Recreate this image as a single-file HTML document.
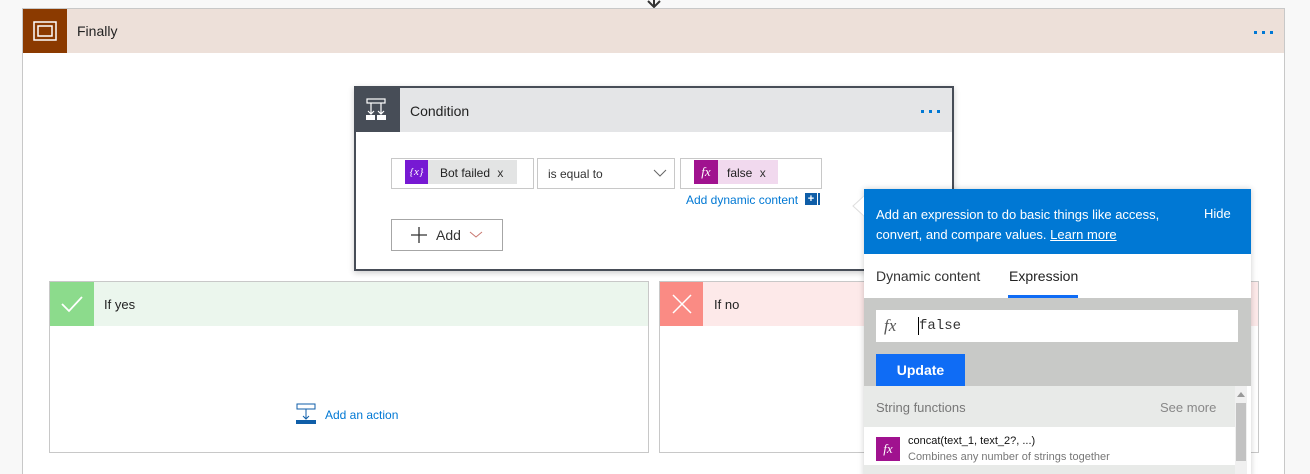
<!DOCTYPE html>
<html><head><style>
*{box-sizing:border-box;margin:0;padding:0}
html,body{width:1310px;height:474px;overflow:hidden}
body{background:#f8f8f8;font-family:"Liberation Sans",sans-serif;position:relative;font-size:13px;color:#222}
.a{position:absolute}
</style></head><body>
<svg class="a" style="left:644px;top:0" width="20" height="9"><path d="M10 0 V7 M4 1 L10 7 L16 1" stroke="#333" stroke-width="2" fill="none"/></svg>
<div class="a" style="left:22px;top:8px;width:1263px;height:466px;background:#fff;border:1px solid #c8c8c8;border-bottom:none"></div>
<div class="a" style="left:23px;top:9px;width:1261px;height:44px;background:#ede0d9"></div>
<div class="a" style="left:23px;top:9px;width:44px;height:44px;background:#8b3a00"></div>
<svg class="a" style="left:33px;top:21px" width="24" height="20"><rect x="1" y="1" width="22" height="18" fill="none" stroke="#fff" stroke-width="1.5"/><rect x="5" y="5" width="14" height="10" fill="none" stroke="#fff" stroke-width="1.5"/></svg>
<div class="a" style="left:77px;top:23px;font-size:14px;color:#222">Finally</div>
<div class="a" style="left:1254px;top:31px;width:30px;height:4px"><span class="a" style="left:0;width:3px;height:3px;background:#0078d4"></span><span class="a" style="left:8px;width:3px;height:3px;background:#0078d4"></span><span class="a" style="left:16px;width:3px;height:3px;background:#0078d4"></span></div>

<div class="a" style="left:354px;top:86px;width:600px;height:185px;background:#fff;border:2px solid #474d57;box-shadow:0 2px 6px rgba(0,0,0,.2)"></div>
<div class="a" style="left:356px;top:88px;width:596px;height:44px;background:#e4e5e7"></div>
<div class="a" style="left:356px;top:88px;width:44px;height:44px;background:#474d57"></div>
<svg class="a" style="left:366px;top:98px" width="22" height="24"><rect x="1" y="1" width="18" height="4" fill="none" stroke="#fff" stroke-width="1.2"/><path d="M5 5 V16 M2 13 L5 16 L8 13 M15 5 V16 M12 13 L15 16 L18 13" stroke="#fff" stroke-width="1.2" fill="none"/><rect x="0" y="17" width="9" height="5" fill="#fff"/><rect x="11" y="17" width="9" height="5" fill="#fff"/></svg>
<div class="a" style="left:410px;top:103px;font-size:14px">Condition</div>
<div class="a" style="left:921px;top:110px;width:30px;height:4px"><span class="a" style="left:0;width:3px;height:3px;background:#0078d4"></span><span class="a" style="left:8px;width:3px;height:3px;background:#0078d4"></span><span class="a" style="left:16px;width:3px;height:3px;background:#0078d4"></span></div>

<div class="a" style="left:391px;top:158px;width:143px;height:31px;border:1px solid #c8c8c8"></div>
<div class="a" style="left:405px;top:160px;width:112px;height:24px;background:#e3e4e4"></div>
<div class="a" style="left:405px;top:160px;width:23px;height:24px;background:#7719d3;color:#fff;font-size:11px;font-family:'Liberation Serif',serif;font-style:italic;text-align:center;line-height:24px">{x}</div>
<div class="a" style="left:440px;top:166px;font-size:12px">Bot failed <span style="margin-left:4px;color:#333">x</span></div>
<div class="a" style="left:537px;top:158px;width:138px;height:31px;border:1px solid #c8c8c8"></div>
<div class="a" style="left:548px;top:167px;font-size:12px;color:#333">is equal to</div>
<svg class="a" style="left:653px;top:169px" width="14" height="9"><path d="M1 1 L7 7 L13 1" stroke="#666" fill="none"/></svg>
<div class="a" style="left:680px;top:158px;width:142px;height:31px;border:1px solid #c8c8c8"></div>
<div class="a" style="left:694px;top:160px;width:84px;height:24px;background:#f1d9ee"></div>
<div class="a" style="left:694px;top:160px;width:24px;height:24px;background:#a0128f;color:#fff;font-size:13px;font-family:'Liberation Serif',serif;font-style:italic;text-align:center;line-height:24px">fx</div>
<div class="a" style="left:727px;top:166px;font-size:12px">false <span style="margin-left:4px;color:#333">x</span></div>
<div class="a" style="left:686px;top:193px;font-size:12px;color:#0078d4">Add dynamic content</div>
<div class="a" style="left:805px;top:193px;width:12px;height:12px;background:#0f5ea8;color:#fff;font-size:11px;line-height:12px;text-align:center;font-weight:bold">+</div>
<div class="a" style="left:818px;top:193px;width:2px;height:12px;background:#0f5ea8"></div>

<div class="a" style="left:391px;top:219px;width:112px;height:32px;border:1px solid #a6a6a6"></div>
<svg class="a" style="left:410px;top:226px" width="18" height="18"><path d="M9 1 V17 M1 9 H17" stroke="#333" stroke-width="1.3"/></svg>
<div class="a" style="left:436px;top:227px;font-size:14px;color:#333">Add</div>
<svg class="a" style="left:469px;top:231px" width="14" height="8"><path d="M1 1 L7 6 L13 1" stroke="#c8776f" fill="none"/></svg>

<div class="a" style="left:49px;top:281px;width:600px;height:172px;border:1px solid #c8c8c8;background:#fff"></div>
<div class="a" style="left:50px;top:282px;width:598px;height:44px;background:#ebf6ed"></div>
<div class="a" style="left:50px;top:282px;width:44px;height:44px;background:#8cdb8c"></div>
<svg class="a" style="left:60px;top:294px" width="24" height="20"><path d="M2 10 L9 17 L22 3" stroke="#fff" stroke-width="1.8" fill="none"/></svg>
<div class="a" style="left:104px;top:297px;font-size:13px">If yes</div>
<svg class="a" style="left:296px;top:403px" width="24" height="22"><rect x="1" y="1" width="18" height="5" fill="none" stroke="#0f5ea8" stroke-width="1"/><path d="M10 6 V16 M7 13 L10 16 L13 13" stroke="#0f5ea8" fill="none"/><rect x="0" y="17" width="20" height="4" fill="#0f5ea8"/></svg>
<div class="a" style="left:325px;top:408px;font-size:12px;color:#0078d4">Add an action</div>

<div class="a" style="left:659px;top:281px;width:600px;height:172px;border:1px solid #c8c8c8;background:#fff"></div>
<div class="a" style="left:660px;top:282px;width:598px;height:44px;background:#fde9e9"></div>
<div class="a" style="left:660px;top:282px;width:43px;height:44px;background:#fa8b84"></div>
<svg class="a" style="left:671px;top:293px" width="22" height="22"><path d="M2 2 L20 20 M20 2 L2 20" stroke="#fff" stroke-width="1.5"/></svg>
<div class="a" style="left:714px;top:297px;font-size:13px">If no</div>

<div class="a" style="left:864px;top:189px;width:387px;height:290px;background:#fff;box-shadow:0 0 6px rgba(0,0,0,.2)"></div>
<svg class="a" style="left:851px;top:195px" width="15" height="22"><path d="M14 0 L2 11 L14 22 Z" fill="#fff"/><path d="M14 0 L2 11 L14 22" stroke="#ddd" fill="none"/></svg>
<div class="a" style="left:864px;top:189px;width:387px;height:65px;background:#0078d4"></div>
<div class="a" style="left:876px;top:205px;width:310px;font-size:13px;line-height:20px;color:#fff">Add an expression to do basic things like access, convert, and compare values. <u>Learn more</u></div>
<div class="a" style="left:1204px;top:206px;font-size:13px;color:#fff">Hide</div>
<div class="a" style="left:876px;top:268px;font-size:14px;color:#333">Dynamic content</div>
<div class="a" style="left:1009px;top:268px;font-size:14px;color:#222">Expression</div>
<div class="a" style="left:1008px;top:295px;width:70px;height:3px;background:#0f6cf5"></div>
<div class="a" style="left:864px;top:298px;width:387px;height:88px;background:#c8c9c7"></div>
<div class="a" style="left:876px;top:310px;width:362px;height:32px;background:#fff"></div>
<div class="a" style="left:884px;top:316px;font-size:17px;font-family:'Liberation Serif',serif;font-style:italic;color:#555">fx</div>
<div class="a" style="left:918px;top:317px;width:1px;height:18px;background:#000"></div>
<div class="a" style="left:919px;top:318px;font-size:14px;font-family:'Liberation Mono',monospace;color:#333">false</div>
<div class="a" style="left:876px;top:354px;width:89px;height:32px;background:#0f6cf5;color:#fff;font-weight:bold;font-size:14px;text-align:center;line-height:32px">Update</div>
<div class="a" style="left:864px;top:386px;width:371px;height:41px;background:#e8eae8"></div>
<div class="a" style="left:876px;top:400px;font-size:13px;color:#777">String functions</div>
<div class="a" style="left:1160px;top:400px;font-size:13px;color:#888">See more</div>
<div class="a" style="left:1235px;top:386px;width:12px;height:88px;background:#f0f0f0"></div>
<div class="a" style="left:1236px;top:403px;width:10px;height:58px;background:#c2c2c2"></div>
<svg class="a" style="left:1237px;top:392px" width="8" height="5"><path d="M0 5 L4 0 L8 5Z" fill="#999"/></svg>
<div class="a" style="left:876px;top:437px;width:24px;height:24px;background:#a0128f;color:#fff;font-size:13px;font-family:'Liberation Serif',serif;font-style:italic;text-align:center;line-height:24px">fx</div>
<div class="a" style="left:908px;top:435px;font-size:11px;color:#111">concat(text_1, text_2?, ...)</div>
<div class="a" style="left:908px;top:451px;font-size:11px;color:#777">Combines any number of strings together</div>
<div class="a" style="left:864px;top:465px;width:371px;height:10px;background:#e8eae8"></div>
</body></html>
